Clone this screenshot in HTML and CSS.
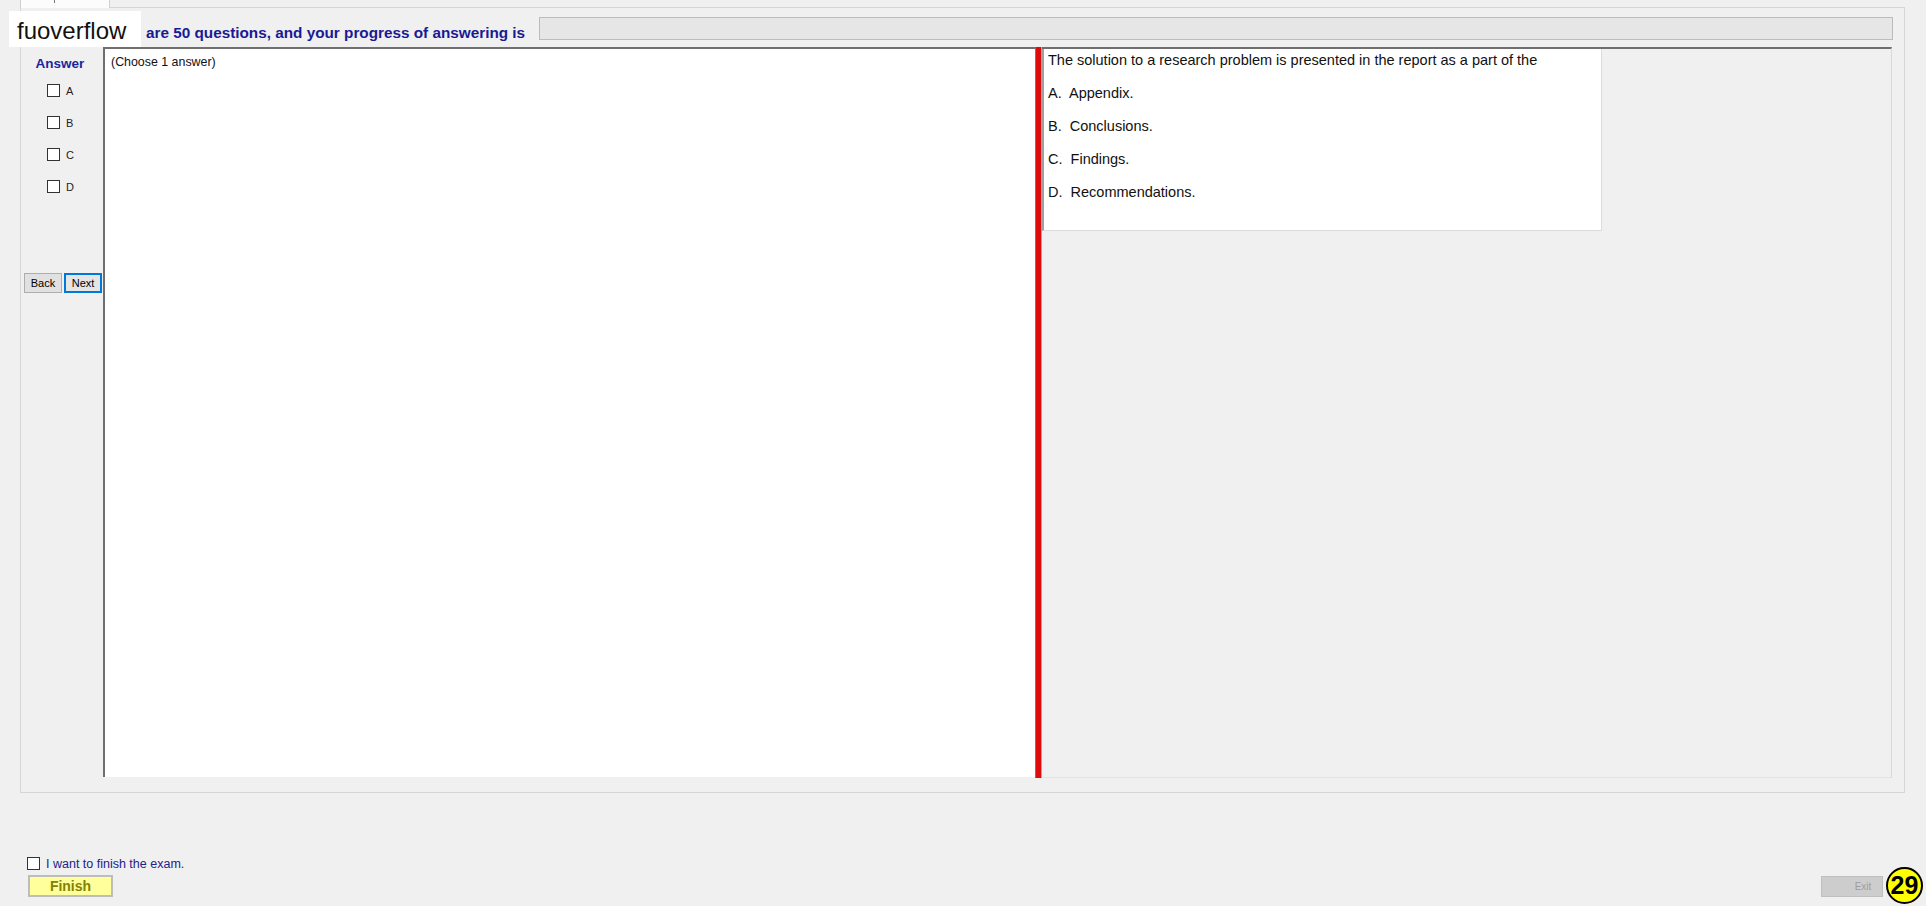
FILE: index.html
```html
<!DOCTYPE html>
<html lang="en">
<head>
  <meta charset="UTF-8">
  <title>Exam</title>
  <link rel="stylesheet" href="styles.css">
</head>
<body>
  <div class="window">
    <div class="tabstrip">
      <div class="tab"><i class="tab-mark"></i></div>
    </div>

    <div class="tabpage">
      <div class="header">
        <span class="progress-text">are 50 questions, and your progress of answering is</span>
        <div class="progress"></div>
      </div>

      <div class="workspace">
        <div class="answers">
          <div class="answer-title">Answer</div>
          <div class="options">
            <label class="option"><input type="checkbox"> A</label>
            <label class="option"><input type="checkbox"> B</label>
            <label class="option"><input type="checkbox"> C</label>
            <label class="option"><input type="checkbox"> D</label>
          </div>
          <div class="nav">
            <button class="nav-btn">Back</button>
            <button class="nav-btn next">Next</button>
          </div>
        </div>

        <div class="question-pane">(Choose 1 answer)</div>
        <div class="splitter"></div>

        <div class="content-pane">
          <div class="question-card">
            <p>The solution to a research problem is presented in the report as a part of the</p>
            <p>A.  Appendix.</p>
            <p>B.  Conclusions.</p>
            <p>C.  Findings.</p>
            <p>D.  Recommendations.</p>
          </div>
        </div>
      </div>
    </div>

    <div class="footer">
      <div class="finish-group">
        <label class="finish-check"><input type="checkbox"> I want to finish the exam.</label>
        <button class="finish-btn">Finish</button>
      </div>
      <div class="exit-group">
        <button class="exit-btn" disabled>Exit</button>
        <div class="badge">29</div>
      </div>
    </div>

    <div class="brand">fuoverflow</div>
  </div>
</body>
</html>
```

FILE: styles.css
```css
body {
  margin: 0;
  padding: 0;
  background-color: #f0f0f0;
  font-family: "Liberation Sans", Arial, sans-serif;
  width: 1926px;
  height: 906px;
  overflow: hidden;
}

.window {
  position: relative;
  height: 906px;
  display: flex;
  flex-direction: column;
}

/* tab header, mostly cut off at the top */
.tabstrip {
  height: 7px;
  padding-left: 20px;
  display: flex;
  position: relative;
  z-index: 1;
}

.tab {
  width: 90px;
  height: 8px;
  box-sizing: border-box;
  border: 1px solid #d0d0d0;
  border-top: none;
  border-bottom: none;
  background-color: #fcfcfc;
  padding-left: 33px;
}

.tab-mark {
  display: block;
  width: 1px;
  height: 3px;
  background-color: #777;
}

.tabpage {
  margin-left: 20px;
  width: 1885px;
  height: 786px;
  box-sizing: border-box;
  border: 1px solid #d6d6d6;
  padding: 0 12px 12px 2px;
  display: flex;
  flex-direction: column;
}

.header {
  height: 39px;
  display: flex;
  align-items: flex-start;
  padding-left: 123px;
}

.progress-text {
  margin-top: 16px;
  font-size: 15.3px;
  font-weight: bold;
  line-height: 17px;
  color: #1a1a94;
  white-space: nowrap;
}

.progress {
  flex: 1;
  margin: 9px -1px 0 14px;
  height: 23px;
  box-sizing: border-box;
  border: 1px solid #bcbcbc;
  background-color: #e6e6e6;
}

.workspace {
  height: 733px;
  display: flex;
}

/* answer column */
.answers {
  width: 80px;
  flex: none;
  padding-top: 9px;
  box-sizing: border-box;
}

.answer-title {
  width: 74px;
  text-align: center;
  font-size: 13.5px;
  font-weight: bold;
  line-height: 16px;
  color: #1c25a0;
}

.options {
  display: flex;
  flex-direction: column;
  gap: 19px;
  margin-top: 12px;
}

.option {
  display: flex;
  align-items: center;
  gap: 6px;
  height: 13px;
  padding-left: 24px;
  font-size: 11px;
  color: #222;
}

input[type="checkbox"] {
  appearance: none;
  -webkit-appearance: none;
  width: 13px;
  height: 13px;
  margin: 0;
  border: 1px solid #333;
  background-color: #fff;
  flex: none;
}

.nav {
  display: flex;
  gap: 2px;
  margin-top: 80px;
  padding-left: 1px;
}

.nav-btn {
  width: 38px;
  height: 20px;
  padding: 0;
  font-family: "Liberation Sans", Arial, sans-serif;
  font-size: 11px;
  color: #000;
  background-color: #e1e1e1;
  border: 1px solid #adadad;
}

.nav-btn.next {
  border-color: #0078d7;
  box-shadow: inset 0 0 0 1px #0078d7;
  background-color: #e5e5e5;
}

/* question panes */
.question-pane {
  width: 932px;
  flex: none;
  box-sizing: border-box;
  margin-bottom: 3px;
  background-color: #fff;
  border-left: 2px solid #6f6f6f;
  border-top: 2px solid #6f6f6f;
  padding: 6px 0 0 6px;
  font-size: 12.4px;
  line-height: 15px;
  color: #111;
}

.splitter {
  width: 7px;
  flex: none;
  box-sizing: border-box;
  margin-bottom: 2px;
  border-left: 1px solid #7a7a7a;
  border-right: 1px solid #a8a8a8;
  background-color: #dd0b0b;
}

.content-pane {
  flex: 1;
  border-top: 2px solid #6f6f6f;
  border-right: 1px solid #d8d8d8;
  border-bottom: 1px solid #e2e2e2;
  margin-bottom: 2px;
}

.question-card {
  width: 560px;
  height: 182px;
  box-sizing: border-box;
  background-color: #fff;
  border-left: 2px solid #a0a0a0;
  border-right: 1px solid #dcdcdc;
  border-bottom: 1px solid #dcdcdc;
  padding: 3px 0 0 4px;
}

.question-card p {
  margin: 0 0 16px;
  font-size: 14.5px;
  line-height: 17px;
  color: #111;
  white-space: pre;
}

/* bottom bar */
.footer {
  flex: 1;
  display: flex;
  justify-content: space-between;
  align-items: flex-end;
  padding: 0 3px 9px 27px;
}

.finish-group {
  display: flex;
  flex-direction: column;
}

.finish-check {
  display: flex;
  align-items: center;
  gap: 6px;
  height: 13px;
  font-size: 12.5px;
  color: #22228a;
}

.finish-btn {
  margin: 5px 0 0 1px;
  width: 85px;
  height: 22px;
  padding: 0;
  border: 2px solid #bdbdbd;
  background-color: #ffff9c;
  color: #828200;
  font-family: "Liberation Sans", Arial, sans-serif;
  font-size: 14px;
  font-weight: bold;
}

.exit-group {
  display: flex;
  align-items: flex-end;
  gap: 3px;
}

.exit-btn {
  width: 62px;
  height: 21px;
  padding: 0 0 0 22px;
  background-color: #cdcdcd;
  border: 1px solid #bfbfbf;
  color: #9d9d9d;
  font-family: "Liberation Sans", Arial, sans-serif;
  font-size: 10px;
}

.badge {
  width: 37px;
  height: 37px;
  box-sizing: border-box;
  margin-bottom: -7px;
  border-radius: 50%;
  border: 2px solid #000;
  background-color: #ffff00;
  display: flex;
  align-items: center;
  justify-content: center;
  font-size: 25px;
  font-weight: bold;
  color: #000;
}

/* watermark box over the header */
.brand {
  position: absolute;
  left: 9px;
  top: 11px;
  width: 132px;
  height: 36px;
  box-sizing: border-box;
  padding: 3px 0 0 8px;
  background-color: #fff;
  font-size: 24px;
  line-height: 33px;
  color: #111;
}
```
